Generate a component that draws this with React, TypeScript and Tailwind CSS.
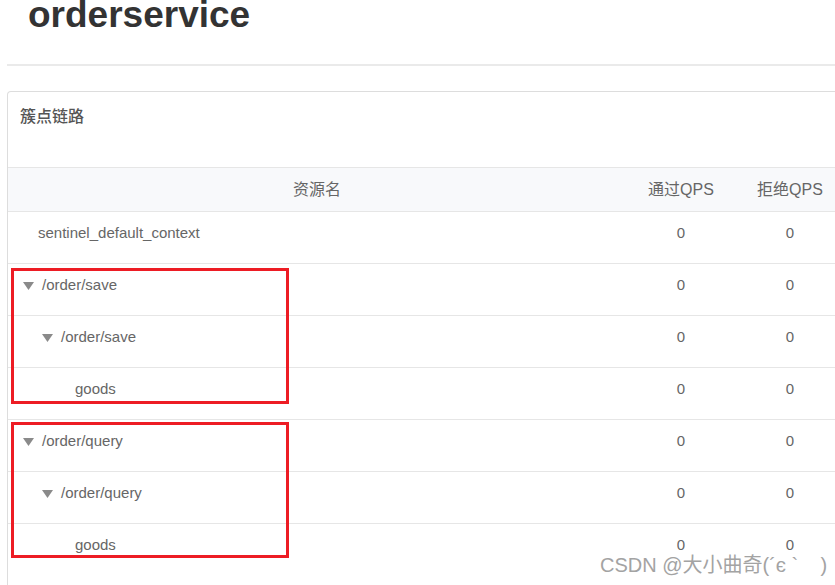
import React from "react";

type Row = { name: string; level: number; arrow: boolean; pass: string; block: string };

const rows: Row[] = [
  { name: "sentinel_default_context", level: 0, arrow: false, pass: "0", block: "0" },
  { name: "/order/save", level: 1, arrow: true, pass: "0", block: "0" },
  { name: "/order/save", level: 2, arrow: true, pass: "0", block: "0" },
  { name: "goods", level: 3, arrow: false, pass: "0", block: "0" },
  { name: "/order/query", level: 1, arrow: true, pass: "0", block: "0" },
  { name: "/order/query", level: 2, arrow: true, pass: "0", block: "0" },
  { name: "goods", level: 3, arrow: false, pass: "0", block: "0" },
];

const padFor: Record<number, string> = {
  0: "pl-[30px]",
  1: "pl-[15px]",
  2: "pl-[34px]",
  3: "pl-[67px]",
};

function Tri() {
  return (
    <svg width="11" height="8" viewBox="0 0 11 8" className="mr-[8px] mt-[2px] shrink-0">
      <polygon points="0,0 11,0 5.5,8" fill="#8a8a8a" />
    </svg>
  );
}

export default function App() {
  return (
    <div
      className="relative w-[835px] h-[585px] overflow-hidden bg-white"
      style={{ fontFamily: '"Liberation Sans", Arial, "Noto Sans CJK SC", sans-serif' }}
    >
      <h1 className="mt-[-4px] ml-[28px] text-[37px] leading-[37px] font-bold text-[#333333]">
        orderservice
      </h1>
      <div className="ml-[7px] mt-[31px] border-t-2 border-[#eaeaea]" />
      <div className="ml-[7px] mt-[25px] w-[1100px] h-[600px] border-x border-t border-[#dddddd] rounded-t-[4px] bg-white">
        <div className="h-[75px] pl-[12px] pt-[15px] text-[16px] leading-[20px] font-medium text-[#555555]">
          簇点链路
        </div>
        <div className="flex h-[45px] items-center border-t border-b border-[#e6e6e6] bg-[#f8f9fb] text-[16px] text-[#666666]">
          <div className="w-[618px] text-center">资源名</div>
          <div className="w-[110px] text-center">通过QPS</div>
          <div className="w-[108px] text-center">拒绝QPS</div>
        </div>
        {rows.map((r, i) => (
          <div
            key={i}
            className={
              "flex h-[52px] pt-[11px] text-[15px] leading-[20px] text-[#666666] " +
              (i < rows.length - 1 ? "border-b border-[#e6e6e6]" : "")
            }
          >
            <div className={"w-[618px] flex items-center h-[20px] " + padFor[r.level]}>
              {r.arrow ? <Tri /> : null}
              <span>{r.name}</span>
            </div>
            <div className="w-[110px] text-center">{r.pass}</div>
            <div className="w-[108px] text-center">{r.block}</div>
          </div>
        ))}
      </div>

      <div className="absolute left-[11px] top-[268px] w-[278px] h-[136px] border-[3px] border-[#ed1c24]" />
      <div className="absolute left-[11px] top-[422px] w-[278px] h-[136px] border-[3px] border-[#ed1c24]" />

      <div className="absolute left-[600px] top-[553px] text-[20px] leading-[24px] text-[#a3a3a3] whitespace-pre">
        CSDN @大小曲奇(´є `    )
      </div>
    </div>
  );
}
